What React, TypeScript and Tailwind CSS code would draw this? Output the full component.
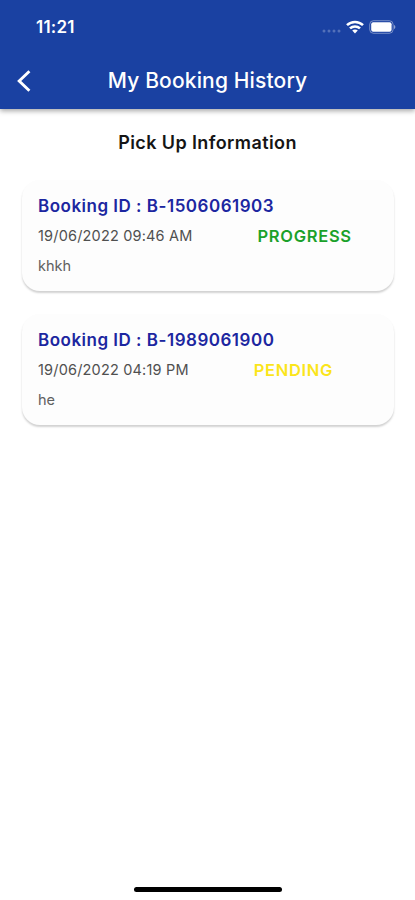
type Booking = {
  id: string;
  date: string;
  note: string;
  status: "PROGRESS" | "PENDING";
};

const bookings: Booking[] = [
  { id: "B-1506061903", date: "19/06/2022 09:46 AM", note: "khkh", status: "PROGRESS" },
  { id: "B-1989061900", date: "19/06/2022 04:19 PM", note: "he", status: "PENDING" },
];

const statusColors: Record<Booking["status"], string> = {
  PROGRESS: "text-[#1aa12a]",
  PENDING: "text-[#fbe51b]",
};

function StatusBar() {
  return (
    <div className="flex h-[53px] items-center justify-between pr-[19px] pl-[36px]">
      <span className="pt-[2px] text-[17px] leading-none font-semibold tracking-[0.2px]">11:21</span>
      <div className="flex items-center">
        <svg className="mt-[9px] mr-[5px]" width="19" height="4" viewBox="0 0 19 4" fill="#fff" fillOpacity="0.25" aria-hidden="true">
          <circle cx="2" cy="2" r="1.5" />
          <circle cx="7" cy="2" r="1.5" />
          <circle cx="12" cy="2" r="1.5" />
          <circle cx="17" cy="2" r="1.5" />
        </svg>
        <svg className="mr-[5px]" width="18" height="14" viewBox="0 0 18 14" fill="none" stroke="#fff" strokeWidth="2.6" aria-hidden="true">
          <path d="M1 5.1C5.5 0.9 12.5 0.9 17 5.1" />
          <path d="M4 8.4C6.8 5.8 11.2 5.8 14 8.4" />
          <path d="M9 13.4L6.2 10.6C7.8 9.2 10.2 9.2 11.8 10.6Z" fill="#fff" stroke="none" />
        </svg>
        <svg width="27" height="14" viewBox="0 0 27 14" fill="none" aria-hidden="true">
          <rect x="0.7" y="0.7" width="23.4" height="12.6" rx="3.8" stroke="#fff" strokeOpacity="0.4" />
          <rect x="2.2" y="2.2" width="20.4" height="9.6" rx="2" fill="#fff" />
          <path d="M25 5V9C25.9 8.6 26.3 7.9 26.3 7C26.3 6.1 25.9 5.4 25 5Z" fill="#fff" fillOpacity="0.5" />
        </svg>
      </div>
    </div>
  );
}

function Header() {
  return (
    <header className="h-[109px] bg-[#1a41a2] text-white shadow-[0_2px_5px_rgba(0,0,0,0.35)]">
      <StatusBar />
      <div className="grid h-[55px] grid-cols-[48px_1fr_48px] items-center">
        <button type="button" aria-label="Back" className="pl-[17px]">
          <svg width="14" height="22" viewBox="0 0 14 22" fill="none" stroke="#fff" strokeWidth="2.9" aria-hidden="true">
            <path d="M12.4 1.2L2.2 11L12.4 20.8" />
          </svg>
        </button>
        <h1 className="text-center text-[21px] leading-none font-medium tracking-[0.15px] whitespace-nowrap">
          My Booking History
        </h1>
      </div>
    </header>
  );
}

function BookingCard({ booking }: { booking: Booking }) {
  return (
    <li className="h-[111px] rounded-[18px] bg-[#fdfdfd] px-[16px] pt-[15px] shadow-[0_2px_2px_rgba(0,0,0,0.18)]">
      <h3 className="text-[17px] leading-[22px] font-semibold tracking-[0.5px] text-[#1c26a0]">
        Booking ID : {booking.id}
      </h3>
      <div className="mt-[8px] flex items-center leading-[22px]">
        <span className="text-[14.5px] tracking-[0.18px] text-[#505050]">{booking.date}</span>
        <span className={`ml-[65px] text-[16.5px] font-semibold tracking-[0.7px] ${statusColors[booking.status]}`}>
          {booking.status}
        </span>
      </div>
      <p className="mt-[8px] text-[14.5px] leading-[22px] text-[#606060]">{booking.note}</p>
    </li>
  );
}

export default function App() {
  return (
    <div className="flex h-[900px] w-full flex-col bg-white font-['Inter',sans-serif]">
      <Header />
      <main className="flex-1">
        <h2 className="mt-[23px] text-center text-[18px] leading-[22px] font-semibold tracking-[0.4px] text-[#151515]">
          Pick Up Information
        </h2>
        <ul className="mt-[26px] space-y-[23px] pr-[21px] pl-[22px]">
          {bookings.map((booking) => (
            <BookingCard key={booking.id} booking={booking} />
          ))}
        </ul>
      </main>
      <div className="mx-auto mb-[8px] h-[5px] w-[148px] rounded-full bg-black" />
    </div>
  );
}
